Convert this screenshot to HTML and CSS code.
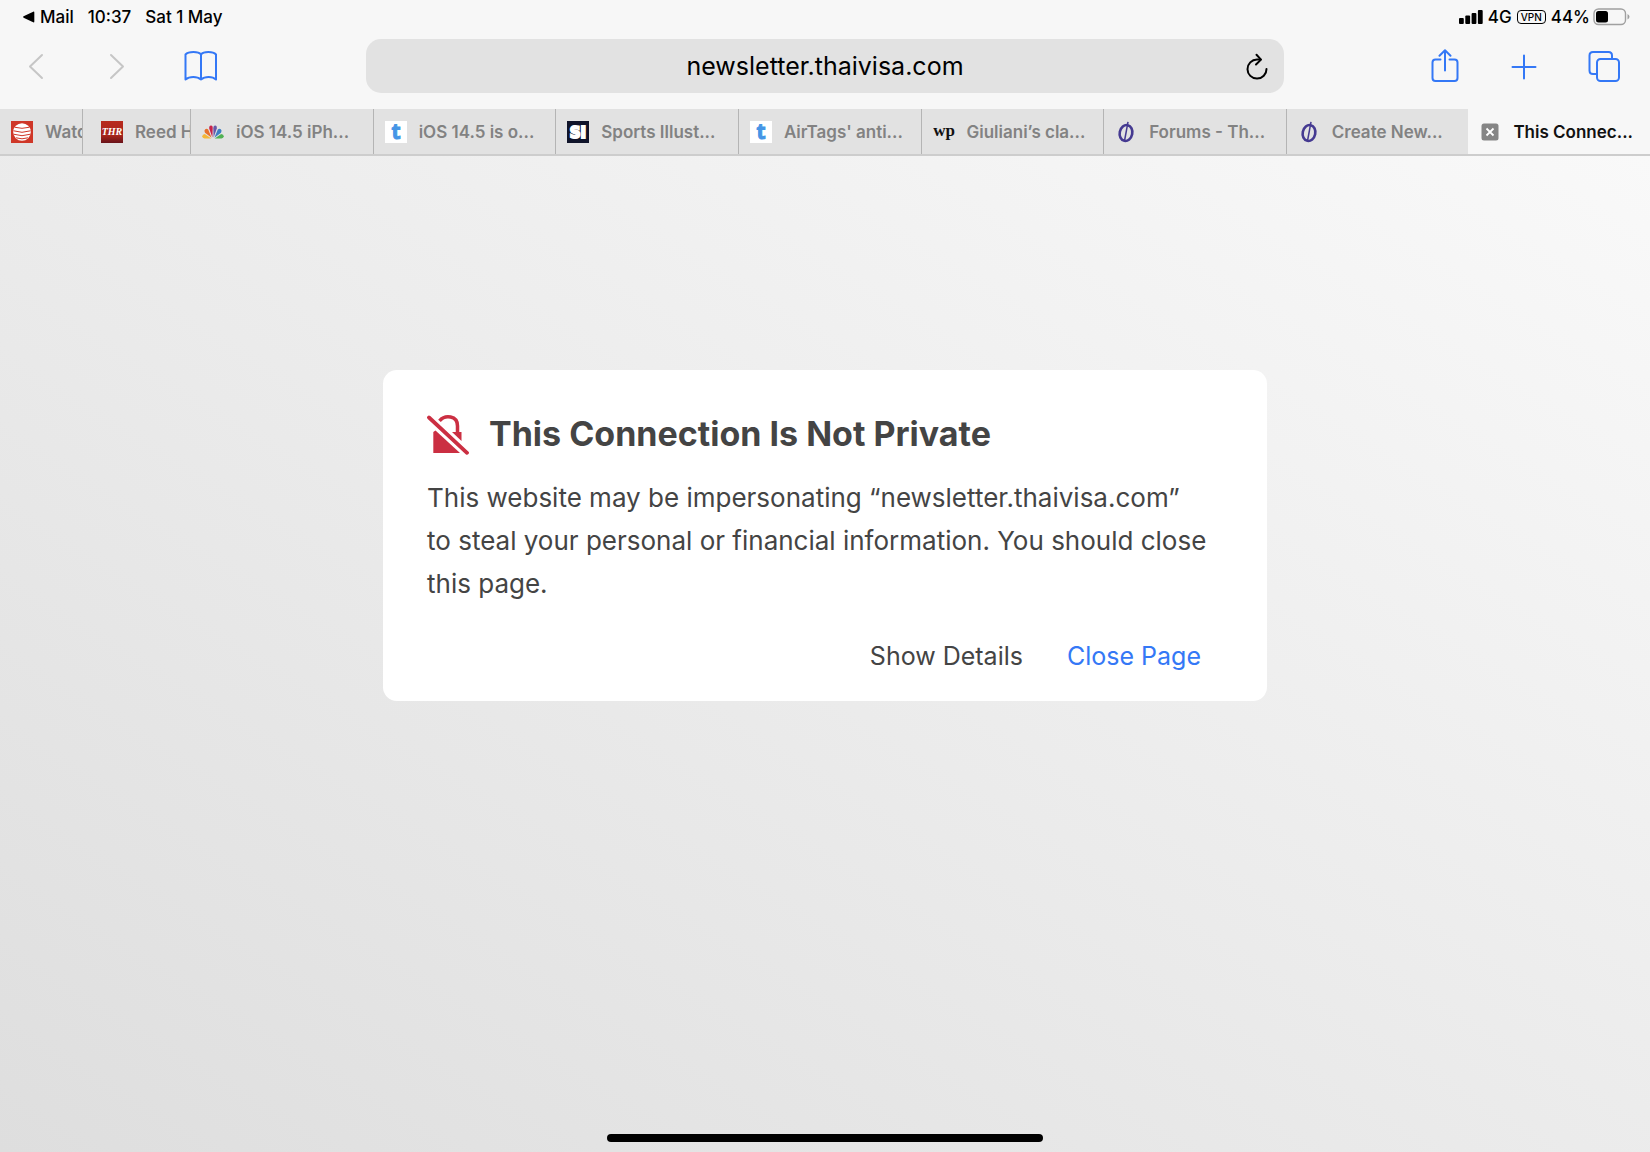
FILE: index.html
```
<!DOCTYPE html>
<html lang="en">
<head>
<meta charset="utf-8">
<meta name="viewport" content="width=device-width, initial-scale=1">
<title>This Connection Is Not Private</title>
<link rel="stylesheet" href="styles.css">
</head>
<body>
<header class="chrome">
  <div class="status">
    <div class="status-left">
      <a class="back-app" href="#mail"><svg width="12" height="12" viewBox="0 0 12 12" aria-hidden="true"><path d="M.6 5.3 10.2.7Q11.3.2 11.3 1.4V10.6Q11.3 11.8 10.2 11.3L.6 6.7Q-.3 6 .6 5.3Z"/></svg>Mail</a>
      <span>10:37</span>
      <span>Sat 1 May</span>
    </div>
    <div class="status-right">
      <svg width="24" height="14" viewBox="0 0 24 14" aria-hidden="true"><rect x="0" y="8" width="4.800" height="6" rx="1"/><rect x="6.300" y="5.500" width="4.800" height="8.500" rx="1"/><rect x="12.600" y="3" width="4.800" height="11" rx="1"/><rect x="18.900" y="0" width="4.800" height="14" rx="1"/></svg>
      <span>4G</span>
      <span class="vpn">VPN</span>
      <span class="battery">44%<svg width="37" height="18" viewBox="0 0 37 18" aria-hidden="true"><rect x="1" y="1" width="31.500" height="15.500" rx="4.500" fill="none" stroke="#a0a0a0" stroke-width="1.400"/><rect x="3" y="3" width="12" height="11.500" rx="2.500"/><path d="M34.500 6v5.500q2-.9 2-2.750T34.500 6Z" fill="#a0a0a0"/></svg></span>
    </div>
  </div>
  <div class="toolbar">
    <div class="tools tools-left">
      <button class="tool dim" aria-label="Back"><svg width="34" height="34" viewBox="0 0 34 34"><path d="M23 6 11 17.500 23 29"/></svg></button>
      <button class="tool dim" aria-label="Forward"><svg width="34" height="34" viewBox="0 0 34 34"><path d="M10 6 22 17.500 10 29"/></svg></button>
      <button class="tool" aria-label="Bookmarks"><svg width="34" height="34" viewBox="0 0 34 34"><path d="M18 5.500C15.500 2.200 5.500 2.200 2.500 5.500V30.500C6.500 27 14 27 18 30.500C22 27 29.500 27 33 30.500V5.500C30 2.200 20.500 2.200 18 5.500V30.500"/></svg></button>
    </div>
    <form class="address">
      <input type="text" aria-label="Address" value="newsletter.thaivisa.com">
      <button class="reload" type="button" aria-label="Reload"><svg width="24" height="28" viewBox="0 0 24 28"><path d="M15.500 6.600H12A9.500 9.500 0 1 0 21.500 16"/><path d="M11.500 1.800 16 6.600 11 11.500"/></svg></button>
    </form>
    <div class="tools tools-right">
      <button class="tool" aria-label="Share"><svg width="34" height="34" viewBox="0 0 34 34"><path d="M12.500 10.500H7.500Q4.500 10.500 4.500 13.500V29Q4.500 32 7.500 32H26.500Q29.500 32 29.500 29V13.500Q29.500 10.500 26.500 10.500H21.500M17 21.500V1.200M11.500 6.700 17 1.200 22.500 6.700"/></svg></button>
      <button class="tool" aria-label="New tab"><svg width="34" height="34" viewBox="0 0 34 34"><path d="M16 6.500V29.500M4.500 18H27.500"/></svg></button>
      <button class="tool" aria-label="Show tabs"><svg width="34" height="34" viewBox="0 0 34 34"><rect x="9" y="10" width="22" height="22" rx="3.500"/><path d="M9 25H5Q1.500 25 1.500 21.500V6.500Q1.500 3 5 3H20.500Q24 3 24 6.500V10"/></svg></button>
    </div>
  </div>
  <nav class="tabs" aria-label="Open tabs">
    <a class="tab tab-first" href="#t1"><svg class="fav" viewBox="0 0 22 22"><rect width="22" height="22" fill="#cf3728"/><circle cx="11" cy="11" r="8.800" fill="#fff"/><path d="M4 6.300Q11 8.300 18 6.300M2.500 9.800Q11 12.800 19.500 9.800M2.500 13.200Q11 16.200 19.500 13.200M5 16.800Q11 18.800 17 16.800" fill="none" stroke="#cf3728" stroke-width="1"/></svg><span>Watch</span></a>
    <a class="tab tab-second" href="#t2"><svg class="fav" viewBox="0 0 22 22"><defs><linearGradient id="thr" x2="0" y2="1"><stop offset="0" stop-color="#b82a1e"/><stop offset=".65" stop-color="#a8251d"/><stop offset="1" stop-color="#68131a"/></linearGradient></defs><rect width="22" height="22" fill="url(#thr)"/><text x="11" y="14" text-anchor="middle" class="fav-thr">THR</text></svg><span>Reed H</span></a>
    <a class="tab" href="#t3"><svg class="fav" viewBox="0 0 22 22"><path d="M10.400 16.500 7.200 7.500Q7 4.500 9 4.500T10.700 7.500Z" fill="#c9234a"/><path d="M11.600 16.500 11.300 7.500Q11.300 4.500 13.200 4.500T14.800 7.500Z" fill="#6959a8"/><path d="M9.600 16.800 3 11.800Q1.700 9.500 3.200 8.300T6.200 8.500Z" fill="#e8702c"/><path d="M12.400 16.800 15.800 8.500Q17.300 7.100 18.800 8.300T19 11.800Z" fill="#3c7fc4"/><path d="M9.300 17.600H2.500Q.3 17.300.3 15.300T2.800 12.900Z" fill="#f4b637"/><path d="M12.700 17.600H19.500Q21.700 17.300 21.700 15.300T19.200 12.900Z" fill="#51b153"/></svg><span>iOS 14.5 iPh...</span></a>
    <a class="tab" href="#t4"><svg class="fav" viewBox="0 0 22 22"><rect width="22" height="22" fill="#fff"/><text x="11" y="18" text-anchor="middle" class="fav-t">t</text></svg><span>iOS 14.5 is o...</span></a>
    <a class="tab" href="#t5"><svg class="fav" viewBox="0 0 22 22"><rect width="22" height="22" fill="#10142a"/><text x="11" y="17" text-anchor="middle" class="fav-si">SI</text></svg><span>Sports Illust...</span></a>
    <a class="tab" href="#t6"><svg class="fav" viewBox="0 0 22 22"><rect width="22" height="22" fill="#fff"/><text x="11" y="18" text-anchor="middle" class="fav-t">t</text></svg><span>AirTags' anti...</span></a>
    <a class="tab" href="#t7"><svg class="fav" viewBox="0 0 22 22"><text x="11" y="15" text-anchor="middle" class="fav-wp">wp</text></svg><span>Giuliani’s cla...</span></a>
    <a class="tab" href="#t8"><svg class="fav" viewBox="0 0 22 22"><g fill="none" stroke="#453a91"><ellipse cx="11" cy="12" rx="6.300" ry="8" stroke-width="2.600" transform="rotate(12 11 12)"/><path d="M13 .8 9.500 20" stroke-width="1.500"/></g></svg><span>Forums - Th...</span></a>
    <a class="tab" href="#t9"><svg class="fav" viewBox="0 0 22 22"><g fill="none" stroke="#453a91"><ellipse cx="11" cy="12" rx="6.300" ry="8" stroke-width="2.600" transform="rotate(12 11 12)"/><path d="M13 .8 9.500 20" stroke-width="1.500"/></g></svg><span>Create New...</span></a>
    <a class="tab tab-active" href="#t10" aria-current="page"><svg class="fav" viewBox="0 0 22 22"><rect x="2.500" y="2.500" width="17" height="17" rx="2.500" fill="#858585"/><path d="M7.500 7.500l7 7M14.500 7.500l-7 7" stroke="#fff" stroke-width="1.800"/></svg><span>This Connec...</span></a>
  </nav>
</header>
<main class="page">
  <section class="card">
    <h1><svg width="42" height="42" viewBox="0 -1 42 42" aria-hidden="true"><path d="M6.300 18 8.500 16.500 33 39H6.300Z" fill="#cb2f42"/><path d="M12.500 6.800C18 .5 30.500 1.300 30.500 12V18" fill="none" stroke="#cb2f42" stroke-width="3.500"/><path d="M25 18H34.500V27Z" fill="#cb2f42"/><path d="M2 4 40 39.500" stroke="#fff" stroke-width="7.500"/><path d="M2 3.500 40 38.800" stroke="#cb2f42" stroke-width="3.800" stroke-linecap="round"/></svg>This Connection Is Not Private</h1>
    <p>This website may be impersonating “newsletter.thaivisa.com”<br>to steal your personal or financial information. You should close this page.</p>
    <div class="actions">
      <button class="action">Show Details</button>
      <button class="action action-primary">Close Page</button>
    </div>
  </section>
  <div class="home-bar"></div>
</main>
</body>
</html>
```
FILE: styles.css
```
* { box-sizing: border-box; }

body {
  margin: 0;
  min-height: 100vh;
  display: flex;
  flex-direction: column;
  font-family: Inter, "Liberation Sans", sans-serif;
  color: #000;
}

button {
  border: 0;
  padding: 0;
  background: none;
  font: inherit;
  color: inherit;
}

a { color: inherit; text-decoration: none; }

.chrome { background: #f7f7f7; }

.status {
  display: flex;
  justify-content: space-between;
  height: 33px;
  padding: 0 20px 0 23px;
  font-size: 17px;
  font-weight: 500;
}

.status-left, .status-right, .back-app, .battery {
  display: flex;
  align-items: center;
}

.status-left { gap: 14px; }
.status-right { gap: 5px; }
.back-app { gap: 5px; }
.battery { gap: 3px; }

.vpn {
  padding: 0 3px;
  border: 1px solid #000;
  border-radius: 4px;
  font-size: 10px;
  line-height: 12px;
}

.toolbar {
  display: grid;
  grid-template-columns: 1fr 57% 1fr;
  align-items: center;
  height: 76px;
  padding: 0 19px 10px;
}

.tools { display: flex; }
.tools-left { gap: 48px; }

.tools-right {
  gap: 46px;
  justify-content: flex-end;
  padding-right: 9px;
}

.tool { color: #3478f6; }
.dim { color: #c6c6c6; }

.tool svg {
  display: block;
  fill: none;
  stroke: currentColor;
  stroke-width: 2;
  stroke-linecap: round;
  stroke-linejoin: round;
}

.address { position: relative; }

.address input {
  display: block;
  width: 100%;
  height: 54px;
  padding: 0 48px;
  border: 0;
  border-radius: 15px;
  background: #e2e2e2;
  font: 400 25px Inter, "Liberation Sans", sans-serif;
  text-align: center;
  color: #000;
}

.reload {
  position: absolute;
  top: 14px;
  right: 15px;
}

.reload svg {
  display: block;
  fill: none;
  stroke: #000;
  stroke-width: 2;
  stroke-linecap: round;
  stroke-linejoin: round;
}

.tabs {
  display: flex;
  height: 47px;
  border-bottom: 2px solid #cdcdcd;
}

.tab {
  display: flex;
  flex: 1;
  align-items: center;
  gap: 12px;
  min-width: 0;
  padding-left: 11px;
  overflow: hidden;
  border-right: 1px solid #b4b4b4;
  background: #e2e2e2;
  color: #828282;
  font-size: 17px;
  font-weight: 600;
  white-space: nowrap;
}

.tab-first { flex: 0 0 83px; }
.tab-second { flex: 0 0 108px; padding-left: 18px; }
.tab:nth-last-child(2) { border-right: 0; }

.tab-active {
  border-right: 0;
  background: #f7f7f7;
  color: #111;
}

.fav { flex: none; width: 22px; height: 22px; }
.fav-thr { font: italic bold 10px "Liberation Serif", serif; fill: #fff; }
.fav-t { font: bold 21px "Open Sans", sans-serif; fill: #4595e6; stroke: #4595e6; }
.fav-si { font: bold 15px "DejaVu Sans", sans-serif; fill: #fff; stroke: #fff; stroke-width: 2px; }
.fav-wp { font: bold 17px "Liberation Serif", serif; fill: #111; }

.page {
  display: flex;
  flex: 1;
  flex-direction: column;
  align-items: center;
  padding: 214px 24px 10px;
  background: linear-gradient(to top right, #dedede, #f9f9f9);
}

.card {
  width: 100%;
  max-width: 884px;
  padding: 42px 44px 28px;
  border-radius: 14px;
  background: #fff;
  color: #444;
}

.card h1 {
  display: flex;
  align-items: center;
  gap: 20px;
  margin: 0;
  font-size: 34px;
  font-weight: 700;
  line-height: 44px;
}

.card h1 svg { flex: none; }

.card p {
  margin: 20px 0 0;
  font-size: 26px;
  line-height: 43px;
}

.actions {
  display: flex;
  justify-content: flex-end;
  gap: 44px;
  margin-top: 35px;
  padding: 0 22px 1px 0;
}

.action { font-size: 25px; line-height: 32px; }
.action-primary { color: #3478f6; }

.home-bar {
  width: 436px;
  max-width: 60%;
  height: 8px;
  margin-top: auto;
  border-radius: 4px;
  background: #000;
}
```
